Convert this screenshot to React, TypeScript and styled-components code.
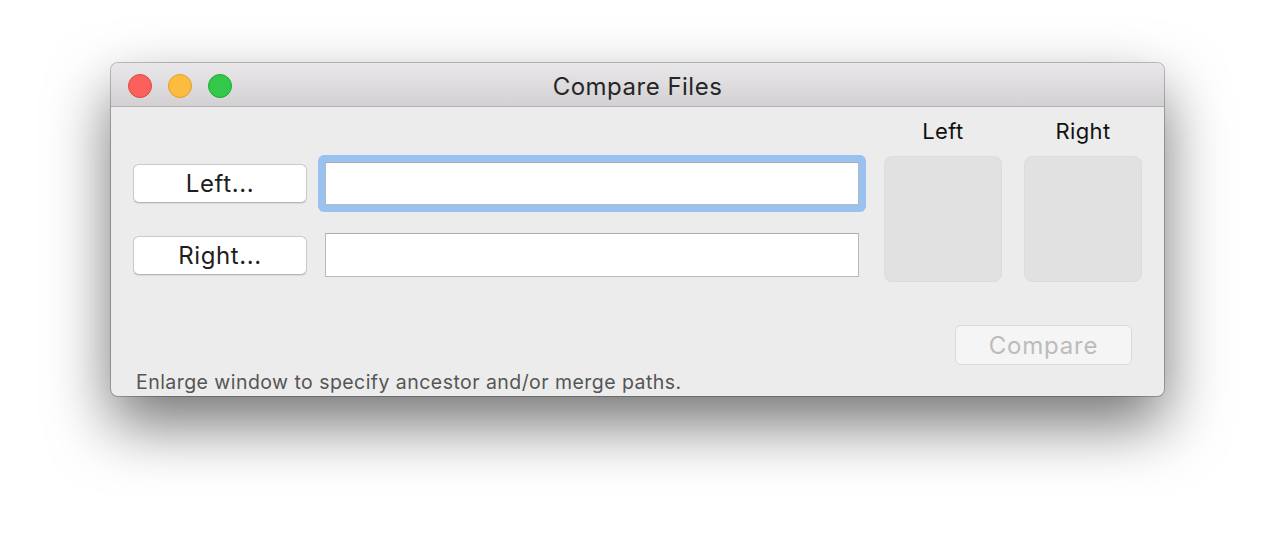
import React from "react";
import styled, { createGlobalStyle } from "styled-components";

const Global = createGlobalStyle`
  html, body { margin: 0; padding: 0; background: #ffffff; }
  body { font-family: Inter, "Noto Sans", "Liberation Sans", sans-serif; }
`;

const Page = styled.div`
  width: 1276px;
  height: 556px;
  padding: 63px 0 0 111px;
  box-sizing: border-box;
`;

const Window = styled.div`
  width: 1053px;
  height: 333px;
  display: flex;
  flex-direction: column;
  background: #ececec;
  border-radius: 7px;
  overflow: hidden;
  box-shadow: 0 0 0 1px rgba(0, 0, 0, 0.24), 0 28px 62px rgba(0, 0, 0, 0.55);
`;

const TitleBar = styled.div`
  height: 43px;
  flex: none;
  position: relative;
  display: flex;
  align-items: center;
  justify-content: center;
  background: linear-gradient(#e9e7e9, #d3d1d3);
  border-bottom: 1px solid #b3b1b3;
`;

const Lights = styled.div`
  position: absolute;
  left: 17px;
  top: 11px;
  display: flex;
  gap: 16px;
`;

const Light = styled.span<{ $fill: string; $edge: string }>`
  width: 24px;
  height: 24px;
  border-radius: 50%;
  box-sizing: border-box;
  background: ${(p) => p.$fill};
  border: 1px solid ${(p) => p.$edge};
`;

const Title = styled.div`
  font-size: 24px;
  color: #262626;
  letter-spacing: 0.5px;
  padding-top: 3px;
`;

const Content = styled.div`
  flex: 1;
  display: flex;
  flex-direction: column;
  padding: 0 22px;
`;

const TopArea = styled.div`
  display: flex;
`;

const FormGrid = styled.div`
  display: grid;
  grid-template-columns: 174px 534px;
  grid-auto-rows: 44px;
  column-gap: 18px;
  row-gap: 28px;
  align-items: center;
  margin-top: 54px;
  margin-right: 25px;
`;

const PushButton = styled.button`
  height: 39px;
  box-sizing: border-box;
  font-family: inherit;
  font-size: 24px;
  letter-spacing: 0.6px;
  color: #1e1e1e;
  background: #ffffff;
  border: 1px solid #c9c9c9;
  border-bottom-color: #b6b6b6;
  border-radius: 6px;
  box-shadow: 0 1px 1px rgba(0, 0, 0, 0.08);
  padding: 0;
`;

const FocusRing = styled.div`
  margin: -7px;
  padding: 7px;
  border-radius: 6px;
  background: #98c2ef;
  display: flex;
`;

const TextField = styled.div<{ $h: number }>`
  flex: 1;
  height: ${(p) => p.$h}px;
  box-sizing: border-box;
  background: #ffffff;
  border: 1px solid #b9b9b9;
  border-top-color: #acacac;
`;

const WellColumn = styled.div`
  width: 118px;
  display: flex;
  flex-direction: column;
  align-items: center;
  padding-top: 11px;
  & + & {
    margin-left: 22px;
  }
`;

const WellLabel = styled.div`
  font-size: 22px;
  letter-spacing: 0.4px;
  line-height: 26px;
  color: #111;
  margin-bottom: 12px;
`;

const Well = styled.div`
  width: 118px;
  height: 126px;
  box-sizing: border-box;
  background: #e1e1e1;
  border: 1px solid #dcdcdc;
  border-radius: 8px;
`;

const ActionRow = styled.div`
  display: flex;
  justify-content: flex-end;
  padding-right: 10px;
  margin-top: 43px;
`;

const CompareButton = styled.button`
  width: 177px;
  height: 40px;
  box-sizing: border-box;
  font-family: inherit;
  font-size: 24px;
  letter-spacing: 0.8px;
  color: #bcbcbc;
  background: #f5f5f5;
  border: 1px solid #d9d9d9;
  border-radius: 6px;
  padding: 0;
`;

const Footer = styled.div`
  font-size: 19.5px;
  letter-spacing: 0.45px;
  color: #555555;
  margin-top: 5px;
  margin-left: 3px;
  line-height: 24px;
`;

export default function App() {
  return (
    <>
      <Global />
      <Page>
        <Window>
          <TitleBar>
            <Lights>
              <Light $fill="#fc605c" $edge="#e0443e" />
              <Light $fill="#fdbc40" $edge="#dea123" />
              <Light $fill="#34c84a" $edge="#1aab29" />
            </Lights>
            <Title>Compare Files</Title>
          </TitleBar>
          <Content>
            <TopArea>
              <FormGrid>
                <PushButton>Left...</PushButton>
                <FocusRing>
                  <TextField $h={43} />
                </FocusRing>
                <PushButton>Right...</PushButton>
                <TextField $h={44} />
              </FormGrid>
              <WellColumn>
                <WellLabel>Left</WellLabel>
                <Well />
              </WellColumn>
              <WellColumn>
                <WellLabel>Right</WellLabel>
                <Well />
              </WellColumn>
            </TopArea>
            <ActionRow>
              <CompareButton disabled>Compare</CompareButton>
            </ActionRow>
            <Footer>Enlarge window to specify ancestor and/or merge paths.</Footer>
          </Content>
        </Window>
      </Page>
    </>
  );
}
